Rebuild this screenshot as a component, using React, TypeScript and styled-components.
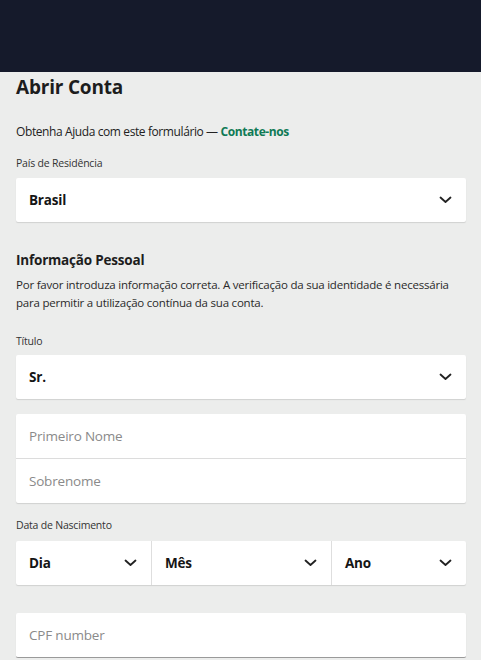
import React from 'react';
import styled, { createGlobalStyle } from 'styled-components';

const GlobalStyle = createGlobalStyle`
  *, *::before, *::after {
    box-sizing: border-box;
  }
  html, body {
    margin: 0;
    padding: 0;
    background: #ecedec;
    font-family: "Open Sans", "Noto Sans", sans-serif;
    color: #1b1b1b;
  }
`;

const TopBar = styled.header`
  height: 72px;
  background: #151a2b;
`;

const Page = styled.main`
  padding: 0 15px 0 16px;
  display: flex;
  flex-direction: column;
`;

const Title = styled.h1`
  margin: 1px 0 0;
  font-size: 19px;
  font-weight: 700;
  line-height: 28px;
  letter-spacing: -0.2px;
  color: #1d1d1d;
`;

const Help = styled.p`
  margin: 22px 0 0;
  font-size: 12px;
  line-height: 18px;
  letter-spacing: -0.4px;
  color: #222;
`;

const Link = styled.a`
  color: #0f7a55;
  font-weight: 700;
  text-decoration: none;
`;

const Label = styled.div<{ $top?: number }>`
  margin-top: ${p => p.$top ?? 12}px;
  font-size: 10.5px;
  line-height: 14px;
  letter-spacing: -0.2px;
  color: #333;
`;

const Box = styled.div<{ $top?: number; $underline?: boolean }>`
  margin-top: ${p => p.$top ?? 8}px;
  background: #fff;
  border-radius: 2px;
  box-shadow: 0 1px 1px rgba(0, 0, 0, 0.12);
  display: flex;
  flex-direction: column;
  ${p => p.$underline && 'border-bottom: 1px solid #9a9a9a;'}
`;

const Row = styled.div`
  display: flex;
  height: 44px;
`;

const Select = styled.div<{ $basis?: string }>`
  flex: ${p => (p.$basis ? `0 0 ${p.$basis}` : '1 1 auto')};
  min-width: 0;
  padding: 0 14px 0 13px;
  display: flex;
  align-items: center;
  justify-content: space-between;
  font-size: 13.5px;
  font-weight: 700;
  letter-spacing: -0.2px;
  color: #151515;
  & + & {
    border-left: 1px solid #dedede;
  }
`;

const Field = styled.div`
  height: 44px;
  padding: 0 13px;
  display: flex;
  align-items: center;
  font-size: 13.5px;
  letter-spacing: -0.2px;
  color: #8a8a8a;
  & + & {
    border-top: 1px solid #dcdcdc;
    height: 45px;
  }
`;

const Section = styled.h2`
  margin: 28px 0 0;
  font-size: 13.5px;
  font-weight: 700;
  line-height: 20px;
  letter-spacing: -0.2px;
  color: #1d1d1d;
`;

const Text = styled.p`
  margin: 6px 0 0;
  font-size: 11.5px;
  line-height: 18px;
  letter-spacing: -0.22px;
  color: #2a2a2a;
`;

const Chevron = () => (
  <svg width="13" height="8" viewBox="0 0 13 8" fill="none">
    <path d="M1.5 1.5 L6.5 6 L11.5 1.5" stroke="#222" strokeWidth="1.8" strokeLinecap="round" strokeLinejoin="round" />
  </svg>
);

export default function App() {
  return (
    <>
      <GlobalStyle />
      <TopBar />
      <Page>
        <Title>Abrir Conta</Title>
        <Help>
          Obtenha Ajuda com este formulário — <Link href="#">Contate-nos</Link>
        </Help>
        <Label $top={15}>País de Residência</Label>
        <Box>
          <Row>
            <Select>Brasil<Chevron /></Select>
          </Row>
        </Box>

        <Section>Informação Pessoal</Section>
        <Text>
          Por favor introduza informação correta. A verificação da sua identidade é necessária
          para permitir a utilização contínua da sua conta.
        </Text>
        <Label $top={22}>Título</Label>
        <Box $top={7}>
          <Row>
            <Select>Sr.<Chevron /></Select>
          </Row>
        </Box>
        <Box $top={15}>
          <Field>Primeiro Nome</Field>
          <Field>Sobrenome</Field>
        </Box>
        <Label $top={15}>Data de Nascimento</Label>
        <Box $top={9}>
          <Row>
            <Select $basis="30%">Dia<Chevron /></Select>
            <Select $basis="40%">Mês<Chevron /></Select>
            <Select $basis="30%">Ano<Chevron /></Select>
          </Row>
        </Box>
        <Box $top={28} $underline>
          <Field>CPF number</Field>
        </Box>
      </Page>
    </>
  );
}
